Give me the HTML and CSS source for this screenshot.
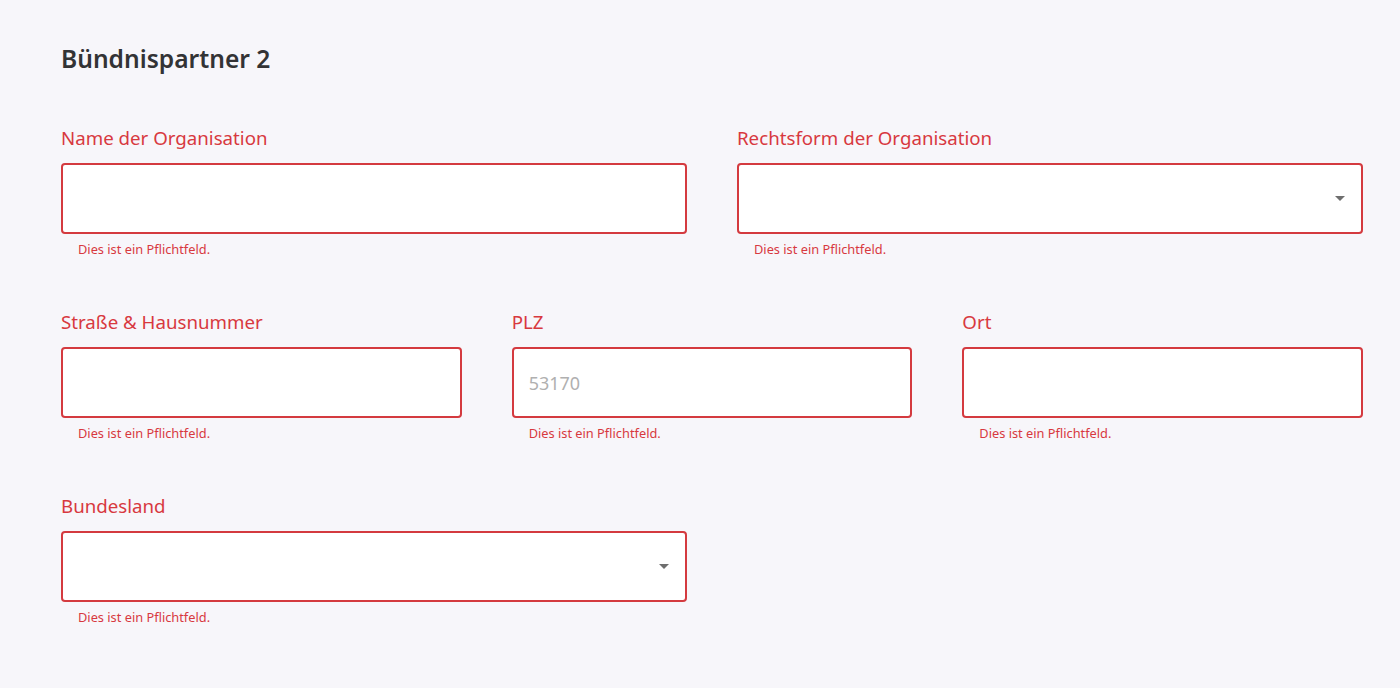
FILE: index.html
```html
<!DOCTYPE html>
<html lang="de">
<head>
<meta charset="utf-8">
<title>Bündnispartner 2</title>
<link rel="stylesheet" href="styles.css">
</head>
<body>
<main class="form">
  <h2 class="title">Bündnispartner 2</h2>

  <div class="row row-2">
    <div class="field">
      <label class="label">Name der Organisation</label>
      <div class="control"><input class="input" type="text"></div>
      <div class="error">Dies ist ein Pflichtfeld.</div>
    </div>
    <div class="field">
      <label class="label">Rechtsform der Organisation</label>
      <div class="control select"><span class="caret"></span></div>
      <div class="error">Dies ist ein Pflichtfeld.</div>
    </div>
  </div>

  <div class="row row-3">
    <div class="field">
      <label class="label">Straße &amp; Hausnummer</label>
      <div class="control"><input class="input" type="text"></div>
      <div class="error">Dies ist ein Pflichtfeld.</div>
    </div>
    <div class="field">
      <label class="label">PLZ</label>
      <div class="control"><input class="input" type="text" placeholder="53170"></div>
      <div class="error">Dies ist ein Pflichtfeld.</div>
    </div>
    <div class="field">
      <label class="label">Ort</label>
      <div class="control"><input class="input" type="text"></div>
      <div class="error">Dies ist ein Pflichtfeld.</div>
    </div>
  </div>

  <div class="row row-2">
    <div class="field">
      <label class="label">Bundesland</label>
      <div class="control select"><span class="caret"></span></div>
      <div class="error">Dies ist ein Pflichtfeld.</div>
    </div>
  </div>
</main>
</body>
</html>
```

FILE: styles.css
```css
html, body {
  margin: 0;
  padding: 0;
  background: #f7f6fa;
  font-family: "Noto Sans", "Open Sans", sans-serif;
}

.form {
  padding: 43px 37px 0 61px;
  display: flex;
  flex-direction: column;
  gap: 53px;
}

.title {
  margin: 0 0 -2px 0;
  font-size: 24.6px;
  line-height: 32px;
  font-weight: 600;
  color: #333335;
}

.row {
  display: grid;
  column-gap: 50px;
}

.row-2 { grid-template-columns: 1fr 1fr; }
.row-3 { grid-template-columns: 1fr 1fr 1fr; }

.field {
  display: flex;
  flex-direction: column;
}

.label {
  font-size: 18.7px;
  line-height: 24px;
  color: #d8393f;
  margin-bottom: 13px;
}

.control {
  position: relative;
  height: 71px;
  box-sizing: border-box;
  border: 2px solid #d43a3f;
  border-radius: 4px;
  background: #ffffff;
}

.input {
  width: 100%;
  height: 100%;
  box-sizing: border-box;
  border: 0;
  outline: none;
  background: transparent;
  padding: 0 15px;
  font-family: inherit;
  font-size: 18px;
  color: #333;
}

.input::placeholder {
  color: #b0b0b0;
}

.select .caret {
  position: absolute;
  right: 16px;
  top: 50%;
  margin-top: -3px;
  width: 0;
  height: 0;
  border-left: 5px solid transparent;
  border-right: 5px solid transparent;
  border-top: 5px solid #6e6e6e;
}

.error {
  margin-top: 7px;
  padding-left: 17px;
  font-size: 12.8px;
  line-height: 16px;
  color: #d8393f;
}
```
